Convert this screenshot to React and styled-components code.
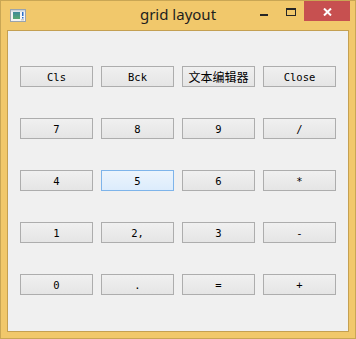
import React from "react";
import styled, { createGlobalStyle } from "styled-components";

const Global = createGlobalStyle`
  html, body { margin: 0; padding: 0; background: #ffffff; }
  * { box-sizing: border-box; }
`;

const Window = styled.div`
  width: 356px;
  height: 339px;
  background: #f1c86b;
  border: 1px solid #c9a654;
  padding: 0 6px 6px 6px;
  display: flex;
  flex-direction: column;
`;

const TitleBar = styled.div`
  height: 29px;
  margin: 0 -6px;
  display: grid;
  grid-template-columns: 1fr auto 1fr;
  align-items: start;
`;

const IconSlot = styled.div`
  padding: 8px 0 0 9px;
  display: flex;
`;

const Title = styled.div`
  font-family: "Noto Sans", "Open Sans", sans-serif;
  font-size: 15px;
  line-height: 20px;
  color: #1e1e1e;
  padding-top: 3px;
  white-space: nowrap;
`;

const Controls = styled.div`
  display: flex;
  justify-content: flex-end;
  padding-right: 5px;
`;

const CapButton = styled.div`
  width: ${(p) => p.$w}px;
  height: 20px;
  display: flex;
  align-items: center;
  justify-content: center;
  background: ${(p) => (p.$close ? "#c75050" : "transparent")};
`;

const Client = styled.div`
  flex: 1;
  background: #f0f0f0;
  border: 1px solid #c4a052;
  padding: 35px 12px 36px 12px;
  display: grid;
  grid-template-columns: repeat(4, 73px);
  grid-template-rows: repeat(5, 21px);
  column-gap: 8px;
  row-gap: 31px;
`;

const Button = styled.div`
  height: 21px;
  border: 1px solid ${(p) => (p.$hover ? "#7eb4ea" : "#adadad")};
  background: ${(p) =>
    p.$hover
      ? "linear-gradient(#ecf4fc, #dcecfc)"
      : "linear-gradient(#f0f0f0, #e5e5e5)"};
  display: flex;
  align-items: center;
  justify-content: center;
  font-family: ${(p) =>
    p.$cjk
      ? '"Noto Sans CJK SC", sans-serif'
      : '"DejaVu Sans Mono", "Liberation Mono", monospace'};
  font-size: ${(p) => (p.$cjk ? "12px" : "10.5px")};
  color: #000;
  line-height: 1;
  padding-top: 1px;
`;

const AppIcon = () => (
  <svg width="16" height="13" viewBox="0 0 16 13">
    <rect x="0.5" y="0.5" width="15" height="12" fill="#f4f4f4" stroke="#9aa4ad" />
    <rect x="1" y="1" width="14" height="1.5" fill="#c9d3dc" />
    <defs>
      <linearGradient id="ig" x1="0" y1="0" x2="0" y2="1">
        <stop offset="0" stopColor="#3d8a9a" />
        <stop offset="1" stopColor="#58a870" />
      </linearGradient>
    </defs>
    <rect x="3" y="3" width="7" height="7" fill="url(#ig)" />
    <rect x="12" y="3" width="1.5" height="4" fill="#2c6fc8" />
    <rect x="12" y="8" width="1.5" height="1.5" fill="#2c6fc8" />
    <rect x="11" y="10" width="3" height="1.5" fill="#c8c8c8" />
  </svg>
);

const MinIcon = () => (
  <svg width="8" height="2" viewBox="0 0 8 2" style={{ marginTop: 7 }}>
    <rect x="0" y="0" width="8" height="2" fill="#262626" />
  </svg>
);

const MaxIcon = () => (
  <svg width="10" height="8" viewBox="0 0 10 8" style={{ marginTop: 2 }}>
    <rect x="0" y="0" width="10" height="2" fill="#262626" />
    <rect x="0.5" y="0.5" width="9" height="7" fill="none" stroke="#262626" />
  </svg>
);

const CloseIcon = () => (
  <svg width="9" height="8" viewBox="0 0 9 8" style={{ marginTop: 1 }}>
    <path d="M1 0.5 L8 7.5 M8 0.5 L1 7.5" stroke="#ffffff" strokeWidth="2" />
  </svg>
);

const labels = [
  "Cls", "Bck", "文本编辑器", "Close",
  "7", "8", "9", "/",
  "4", "5", "6", "*",
  "1", "2,", "3", "-",
  "0", ".", "=", "+",
];

export default function App() {
  return (
    <>
      <Global />
      <Window>
        <TitleBar>
          <IconSlot>
            <AppIcon />
          </IconSlot>
          <Title>grid layout</Title>
          <Controls>
            <CapButton $w={26}>
              <MinIcon />
            </CapButton>
            <CapButton $w={27}>
              <MaxIcon />
            </CapButton>
            <CapButton $w={46} $close>
              <CloseIcon />
            </CapButton>
          </Controls>
        </TitleBar>
        <Client>
          {labels.map((l) => (
            <Button key={l} $hover={l === "5"} $cjk={/[\u4e00-\u9fff]/.test(l)}>
              {l}
            </Button>
          ))}
        </Client>
      </Window>
    </>
  );
}
